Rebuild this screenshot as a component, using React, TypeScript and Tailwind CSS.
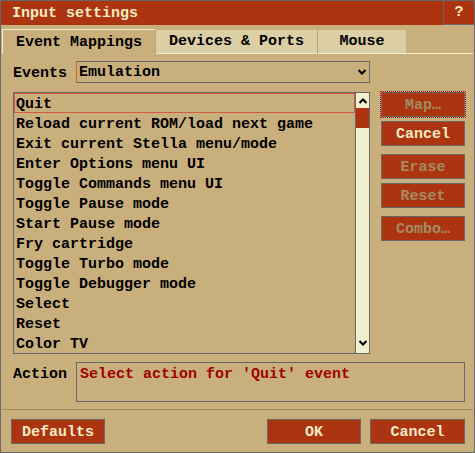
import { ReactNode } from "react";

const events = [
  "Quit",
  "Reload current ROM/load next game",
  "Exit current Stella menu/mode",
  "Enter Options menu UI",
  "Toggle Commands menu UI",
  "Toggle Pause mode",
  "Start Pause mode",
  "Fry cartridge",
  "Toggle Turbo mode",
  "Toggle Debugger mode",
  "Select",
  "Reset",
  "Color TV",
];

function Chevron({ up = false }: { up?: boolean }) {
  return (
    <svg width="8" height="6" viewBox="0 0 8 6" className="block">
      <path
        d={up ? "M0.5 5 L4 1.5 L7.5 5" : "M0.5 1 L4 4.5 L7.5 1"}
        fill="none"
        stroke="#000"
        strokeWidth="2"
      />
    </svg>
  );
}

function Btn({
  children,
  w = "w-[84px]",
  disabled = false,
  focus = false,
}: {
  children: ReactNode;
  w?: string;
  disabled?: boolean;
  focus?: boolean;
}) {
  return (
    <div
      className={`${w} h-[25px] shrink-0 flex items-center justify-center pt-[2px] border border-[#686868] bg-[#ac3410] leading-none ${
        disabled ? "text-[#a38c61]" : "text-[#f3ebc4]"
      } ${focus ? "outline-1 outline-dotted outline-[#c80000]" : ""}`}
    >
      {children}
    </div>
  );
}

export default function App() {
  return (
    <div className="w-[475px] h-[453px] flex flex-col border border-[#686868] bg-[#c9af7c] text-[15px] font-bold text-black font-['Liberation_Mono','DejaVu_Sans_Mono',monospace]">
      {/* title bar */}
      <div className="h-[24px] shrink-0 flex bg-[#ac3410] text-[#f3ebc4]">
        <div className="flex-1 flex items-center pl-[11px] pt-[2px]">Input settings</div>
        <div className="w-[31px] flex items-center justify-center pt-[2px] border-l border-b border-[#686868]">?</div>
      </div>

      {/* tabs */}
      <div className="mt-[4px] h-[25px] shrink-0 flex items-end">
        <div className="ml-[1px] w-[153px] h-[25px] flex items-center justify-center pt-[2px] border-t border-l border-[#f0f0cf]">
          Event Mappings
        </div>
        <div className="w-[162px] h-[24px] flex">
          <div className="w-[1px] bg-[#bda373]" />
          <div className="flex-1 flex items-center justify-center pt-[2px] bg-[#dccfa5] border-b border-[#f0f0cf]">
            Devices &amp; Ports
          </div>
        </div>
        <div className="w-[89px] h-[24px] flex">
          <div className="w-[1px] bg-[#bda373]" />
          <div className="flex-1 flex items-center justify-center pt-[2px] bg-[#dccfa5] border-b border-[#f0f0cf]">
            Mouse
          </div>
        </div>
        <div className="flex-1 h-[24px] border-b border-[#f0f0cf] mr-[1px]" />
      </div>

      <div className="pl-[12px] flex flex-col">
        {/* events row */}
        <div className="mt-[7px] h-[22px] flex items-center">
          <div className="w-[63px] pt-[4px] h-[22px] flex items-center">Events</div>
          <div className="w-[294px] h-[22px] flex border border-l-0 border-[#686868]">
            <div className="w-[1px] bg-[#d55941]" />
            <div className="flex-1 flex items-center justify-between pl-[2px] pr-[3px]">
              <span className="pt-[3px]">Emulation</span>
              <Chevron />
            </div>
          </div>
        </div>

        {/* list + buttons */}
        <div className="mt-[9px] flex">
          <div className="w-[357px] h-[262px] flex border border-[#686868]">
            <div className="w-[341px] flex flex-col">
              {events.map((e, i) => (
                <div
                  key={e}
                  className={`h-[20px] shrink-0 flex items-center pt-[4px] whitespace-pre ${
                    i === 0 ? "border border-[#d55941] pl-[1px]" : "pl-[2px]"
                  }`}
                >
                  {e}
                </div>
              ))}
            </div>
            <div className="w-[14px] flex flex-col border-l border-[#686868] bg-[#f0f0cf]">
              <div className="h-[15px] flex items-center justify-center pl-[1px]">
                <Chevron up />
              </div>
              <div className="h-[20px] bg-[#ac3410]" />
              <div className="flex-1" />
              <div className="h-[14px] flex items-start justify-center pl-[1px] pt-[1px]">
                <Chevron />
              </div>
            </div>
          </div>

          <div className="ml-[11px] flex flex-col">
            <Btn disabled focus>Map…</Btn>
            <div className="mt-[4px]">
              <Btn>Cancel</Btn>
            </div>
            <div className="mt-[8px]">
              <Btn disabled>Erase</Btn>
            </div>
            <div className="mt-[4px]">
              <Btn disabled>Reset</Btn>
            </div>
            <div className="mt-[8px]">
              <Btn disabled>Combo…</Btn>
            </div>
          </div>
        </div>

        {/* action */}
        <div className="mt-[8px] flex">
          <div className="w-[63px] h-[20px] mt-[1px] pt-[4px] flex items-center">Action</div>
          <div className="w-[389px] h-[40px] border border-[#686868] pl-[3px] text-[#9f0000]">
            <div className="h-[20px] flex items-center pt-[4px] whitespace-pre">Select action for 'Quit' event</div>
          </div>
        </div>
      </div>

      <div className="mt-[7px] mx-[1px] h-[1px] bg-[#a38c61]" />

      {/* bottom buttons */}
      <div className="mt-[9px] flex justify-between pl-[10px] pr-[9px]">
        <Btn w="w-[94px]">Defaults</Btn>
        <div className="flex gap-[9px]">
          <Btn w="w-[94px]">OK</Btn>
          <Btn w="w-[95px]">Cancel</Btn>
        </div>
      </div>
    </div>
  );
}
